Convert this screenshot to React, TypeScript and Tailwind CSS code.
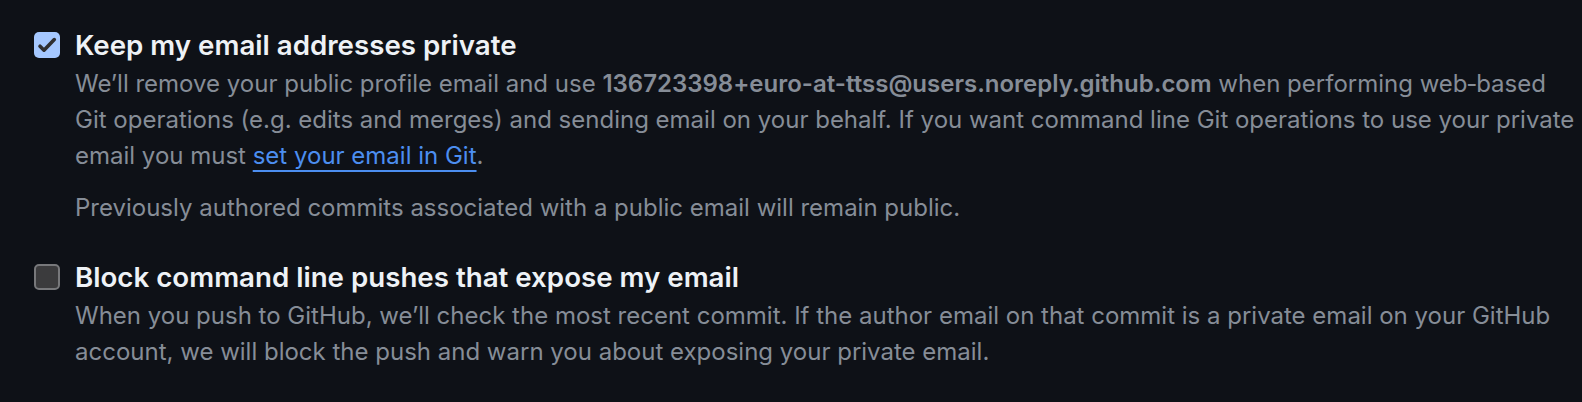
const font = { fontFamily: 'Inter, "Noto Sans", sans-serif' };

const CheckIcon = () => (
  <svg viewBox="0 0 26 26" className="h-[26px] w-[26px]" fill="none">
    <path d="M6 14.2l4 4L20.3 7.6" stroke="#2f2f31" strokeWidth="3.6" strokeLinecap="round" strokeLinejoin="round" />
  </svg>
);

export default function App() {
  return (
    <div className="min-h-[402px] w-full bg-[#0e1117] pt-[24px] pl-[34px] pr-[4px]" style={font}>
      {/* private email */}
      <div className="flex gap-[15px]">
        <div className="mt-[8px] h-[26px] w-[26px] shrink-0 rounded-[5px] bg-[#a5c8ff]">
          <CheckIcon />
        </div>
        <div className="min-w-0">
          <div className="text-[27.7px] leading-[42px] font-semibold text-[#eef2f6]">
            Keep my email addresses private
          </div>
          <p className="text-[24px] leading-[36px] text-[#868d97]">
            We’ll remove your public profile email and use{' '}
            <strong className="font-semibold">136723398+euro-at-ttss@users.noreply.github.com</strong> when performing
            web&#8209;based Git operations (e.g. edits and merges) and sending email on your behalf. If you want command
            line Git operations to use your private email you must{' '}
            <a href="#" className="text-[#4c8ef0] underline decoration-[2px] underline-offset-[6px]">
              set your email in Git
            </a>
            .
          </p>
          <p className="mt-[16px] text-[24px] leading-[36px] text-[#868d97]">
            Previously authored commits associated with a public email will remain public.
          </p>
        </div>
      </div>

      {/* block pushes */}
      <div className="mt-[30px] flex gap-[15px]">
        <div className="mt-[8px] h-[26px] w-[26px] shrink-0 rounded-[5px] border-2 border-[#77787b] bg-[#3b3b3d]" />
        <div className="min-w-0">
          <div className="text-[27.7px] leading-[42px] font-semibold text-[#eef2f6]">
            Block command line pushes that expose my email
          </div>
          <p className="text-[24px] leading-[36px] text-[#868d97]">
            When you push to GitHub, we’ll check the most recent commit. If the author email on that commit is a
            private email on your GitHub account, we will block the push and warn you about exposing your private
            email.
          </p>
        </div>
      </div>
    </div>
  );
}
